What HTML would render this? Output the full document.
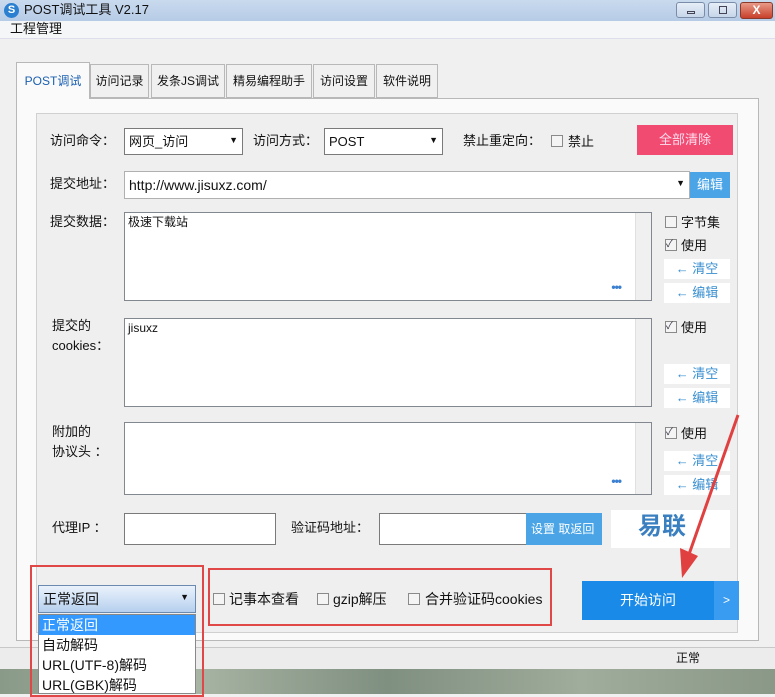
<!DOCTYPE html><html><head><meta charset="utf-8"><style>
*{box-sizing:border-box;margin:0;padding:0}
body{width:775px;height:694px;overflow:hidden;background:#f0f0f0;font-family:"Liberation Sans","Noto Sans CJK SC",sans-serif;font-size:13px;color:#111;position:relative;line-height:1.2}
.a{position:absolute;white-space:nowrap}
.inp{position:absolute;background:#fff;border:1px solid #7a7a7a;white-space:nowrap}
.ta{position:absolute;background:#fff;border:1px solid #828790;font-size:12px;padding:2px 3px}
.sb{position:absolute;right:0;top:0;bottom:0;width:16px;background:#f0f0f0;border-left:1px solid #e0e0e0}
.cb{position:absolute;width:12px;height:12px;border:1px solid #8a8a8a;background:#f4f4f4}
.lk{position:absolute;background:#fff;color:#3a8fd0;width:66px;height:20px;font-size:13px;text-align:center;line-height:20px}
.dots{position:absolute;color:#3a7fd0;font-size:12px;font-weight:bold;letter-spacing:-1px}
.tab{position:absolute;top:64px;height:34px;border:1px solid #b8b8b8;background:#f0f0f0;font-size:12px;line-height:32px;text-align:center;white-space:nowrap}
</style></head><body>
<div class="a" style="left:0;top:0;width:775px;height:21px;background:linear-gradient(#c9daee,#b6cbe6)"></div>
<div class="a" style="left:4px;top:3px;width:15px;height:15px;border-radius:50%;background:#2a7fd0;color:#fff;font-size:11px;text-align:center;line-height:15px;font-weight:bold">S</div>
<div class="a" style="left:24px;top:2px;font-size:13px">POST调试工具 V2.17</div>
<div class="a" style="left:676px;top:2px;width:29px;height:16px;border:1px solid #7a8ca8;border-radius:3px;background:linear-gradient(#e6eef8,#c7d6ea)"><div style="position:absolute;left:10px;top:8px;width:8px;height:3px;border:1px solid #445"></div></div>
<div class="a" style="left:708px;top:2px;width:29px;height:16px;border:1px solid #7a8ca8;border-radius:3px;background:linear-gradient(#e6eef8,#c7d6ea)"><div style="position:absolute;left:10px;top:3px;width:8px;height:8px;border:1px solid #445"></div></div>
<div class="a" style="left:740px;top:2px;width:33px;height:17px;border:1px solid #8a3a2a;border-radius:3px;background:linear-gradient(#e89a88,#c8402a);color:#fff;font-weight:bold;text-align:center;font-size:12px">X</div>
<div class="a" style="left:0;top:21px;width:775px;height:18px;background:#f5f6f8;border-bottom:1px solid #dde"></div>
<div class="a" style="left:10px;top:21px;font-size:13px">工程管理</div>
<div class="a" style="left:16px;top:98px;width:743px;height:543px;border:1px solid #b8b8b8;background:#fafafa"></div>
<div class="tab" style="left:16px;top:62px;width:74px;height:37px;border-bottom:none;background:#fafafa;color:#1a5fb0;line-height:36px">POST调试</div>
<div class="tab" style="left:90px;width:59px">访问记录</div>
<div class="tab" style="left:151px;width:74px">发条JS调试</div>
<div class="tab" style="left:226px;width:86px">精易编程助手</div>
<div class="tab" style="left:313px;width:62px">访问设置</div>
<div class="tab" style="left:376px;width:62px">软件说明</div>
<div class="a" style="left:36px;top:113px;width:702px;height:520px;border:1px solid #d0d0d0;background:#efefef"></div>
<div class="a" style="left:50px;top:133px">访问命令：</div>
<div class="inp" style="left:124px;top:128px;width:119px;height:27px;padding:5px 4px">网页_访问<span style="position:absolute;right:4px;top:6px;font-size:9px">▼</span></div>
<div class="a" style="left:253px;top:133px">访问方式：</div>
<div class="inp" style="left:324px;top:128px;width:119px;height:27px;padding:5px 4px">POST<span style="position:absolute;right:4px;top:6px;font-size:9px">▼</span></div>
<div class="a" style="left:463px;top:133px">禁止重定向：</div>
<div class="cb" style="left:551px;top:135px"></div><div class="a" style="left:568px;top:134px">禁止</div>
<div class="a" style="left:637px;top:125px;width:96px;height:30px;background:#f24b72;color:#fde;text-align:center;line-height:30px">全部清除</div>
<div class="a" style="left:50px;top:176px">提交地址：</div>
<div class="inp" style="left:124px;top:171px;width:566px;height:28px;border-color:#b0b0b0;padding:5px 4px;font-size:14px">http://www.jisuxz.com/<span style="position:absolute;right:4px;top:6px;font-size:9px">▼</span></div>
<div class="a" style="left:690px;top:172px;width:40px;height:26px;background:#4aa4e6;color:#fff;text-align:center;line-height:26px">编辑</div>
<div class="a" style="left:50px;top:214px">提交数据：</div>
<div class="ta" style="left:124px;top:212px;width:528px;height:89px">极速下载站<div class="sb"></div><div class="dots" style="right:30px;bottom:6px">•••</div></div>
<div class="cb" style="left:665px;top:216px"></div><div class="a" style="left:681px;top:215px">字节集</div>
<div class="cb" style="left:665px;top:239px;font-size:10px;line-height:10px;color:#334">✓</div><div class="a" style="left:681px;top:238px">使用</div>
<div class="lk" style="left:664px;top:259px">← 清空</div>
<div class="lk" style="left:664px;top:283px">← 编辑</div>
<div class="a" style="left:52px;top:318px">提交的</div><div class="a" style="left:52px;top:338px">cookies：</div>
<div class="ta" style="left:124px;top:318px;width:528px;height:89px">jisuxz<div class="sb"></div></div>
<div class="cb" style="left:665px;top:321px;font-size:10px;line-height:10px;color:#334">✓</div><div class="a" style="left:681px;top:320px">使用</div>
<div class="lk" style="left:664px;top:364px">← 清空</div>
<div class="lk" style="left:664px;top:388px">← 编辑</div>
<div class="a" style="left:52px;top:424px">附加的</div><div class="a" style="left:52px;top:444px">协议头 ：</div>
<div class="ta" style="left:124px;top:422px;width:528px;height:73px"><div class="sb"></div><div class="dots" style="right:30px;bottom:6px">•••</div></div>
<div class="cb" style="left:665px;top:427px;font-size:10px;line-height:10px;color:#334">✓</div><div class="a" style="left:681px;top:426px">使用</div>
<div class="lk" style="left:664px;top:451px">← 清空</div>
<div class="lk" style="left:664px;top:475px">← 编辑</div>
<div class="a" style="left:52px;top:520px">代理IP ：</div>
<div class="inp" style="left:124px;top:513px;width:152px;height:32px"></div>
<div class="a" style="left:291px;top:520px">验证码地址：</div>
<div class="inp" style="left:379px;top:513px;width:148px;height:32px"></div>
<div class="a" style="left:526px;top:513px;width:76px;height:32px;background:#4aa4e6;color:#fff;font-size:12px;line-height:32px;padding-left:5px">设置 取返回</div>
<div class="a" style="left:611px;top:510px;width:119px;height:38px;background:#fff;color:#3a7fc0;font-size:24px;font-weight:bold;padding:3px 0 0 27px">易联</div>
<div class="a" style="left:0;top:647px;width:775px;height:22px;border-top:1px solid #c8c8c8;background:#ececec"></div>
<div class="a" style="left:676px;top:651px;font-size:12px">正常</div>
<div class="a" style="left:0;top:669px;width:775px;height:25px;background:linear-gradient(90deg,#8a9a88,#a8b4a4,#7f8f80,#a0ac9c,#8a9888)"></div>
<div class="a" style="left:38px;top:585px;width:158px;height:28px;border:1px solid #6a8ab0;background:linear-gradient(#eaf2fb,#b6d0ee);font-size:14px;padding:5px 4px">正常返回<span style="position:absolute;right:6px;top:6px;font-size:9px">▼</span></div>
<div class="a" style="left:38px;top:614px;width:158px;height:80px;background:#fff;border:1px solid #888;font-size:14px;line-height:20px">
<div style="background:#3399ff;color:#fff;padding-left:3px">正常返回</div><div style="padding-left:3px">自动解码</div><div style="padding-left:3px">URL(UTF-8)解码</div><div style="padding-left:3px">URL(GBK)解码</div></div>
<div class="a" style="left:30px;top:565px;width:174px;height:132px;border:2px solid #e04848"></div>
<div class="a" style="left:208px;top:568px;width:344px;height:58px;border:2px solid #e04848"></div>
<div class="cb" style="left:213px;top:593px"></div><div class="a" style="left:229px;top:591px;font-size:14px">记事本查看</div>
<div class="cb" style="left:317px;top:593px"></div><div class="a" style="left:333px;top:591px;font-size:14px">gzip解压</div>
<div class="cb" style="left:408px;top:593px"></div><div class="a" style="left:425px;top:591px;font-size:14px">合并验证码cookies</div>
<div class="a" style="left:582px;top:581px;width:132px;height:39px;background:#1a8ae8;color:#fff;font-size:14px;text-align:center;line-height:39px">开始访问</div>
<div class="a" style="left:714px;top:581px;width:25px;height:39px;background:#3a9cf0;color:#fff;text-align:center;line-height:39px;font-size:12px">&gt;</div>
<svg class="a" style="left:670px;top:410px" width="80" height="170"><line x1="68" y1="5" x2="17" y2="150" stroke="#e04040" stroke-width="3"/><polygon points="10,138 28,146 12,168" fill="#e04040"/></svg>
</body></html>
